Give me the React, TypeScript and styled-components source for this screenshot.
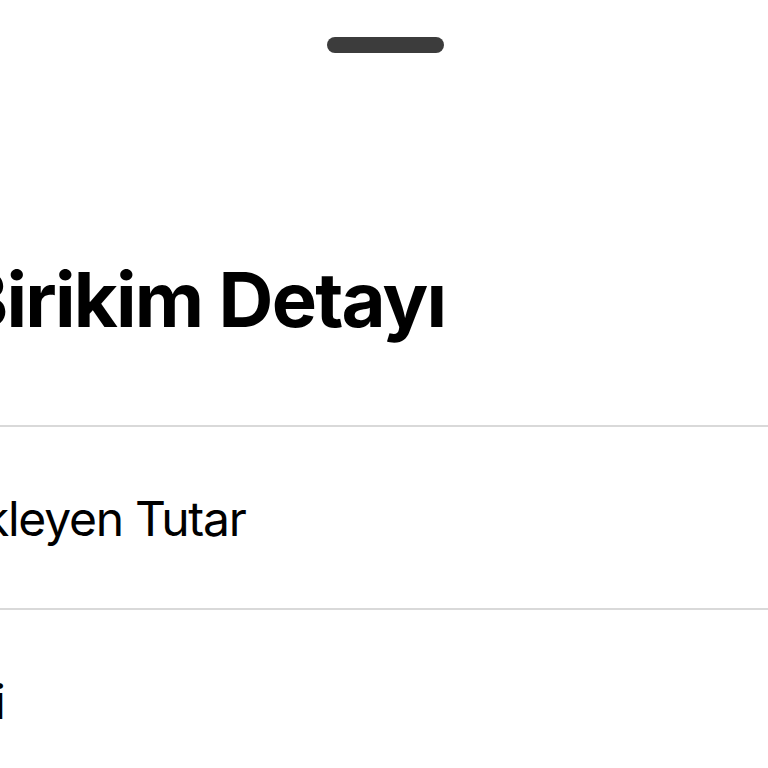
import styled, { createGlobalStyle } from 'styled-components';

const rows = ['Bekleyen Tutar', 'Tipi'];

export default function App() {
  return (
    <>
      <GlobalStyle />
      <Sheet>
        <Handle />
        <Title>Birikim Detayı</Title>
        {rows.map((label) => (
          <Row key={label}>
            <Label>{label}</Label>
          </Row>
        ))}
      </Sheet>
    </>
  );
}

const GlobalStyle = createGlobalStyle`
  html, body {
    margin: 0;
    height: 100%;
    overflow: hidden;
    background: #ffffff;
  }
`;

const Sheet = styled.div`
  width: 768px;
  height: 768px;
  overflow: hidden;

  display: flex;
  flex-direction: column;

  font-family: Inter, 'Noto Sans', sans-serif;
  color: #000000;

  & > * {
    flex-shrink: 0;
  }
`;

const Handle = styled.div`
  align-self: center;
  margin-top: 37px;
  margin-left: 2px;
  width: 117px;
  height: 16px;

  border-radius: 8px;
  background-color: #3c3c3c;
`;

const Title = styled.h1`
  margin: 208px 0 0 -42px;
  padding-bottom: 88px;

  font-size: 76px;
  font-weight: 700;
  line-height: 76px;
  letter-spacing: -1.8px;
  white-space: nowrap;
`;

const Row = styled.div`
  height: 113px;
  padding-top: 68px;

  border-top: 2px solid #d9d9d9;
`;

const Label = styled.p`
  margin: 0 0 0 -74px;

  font-size: 48px;
  font-weight: 400;
  line-height: 48px;
  letter-spacing: -1.25px;
  white-space: nowrap;
`;
